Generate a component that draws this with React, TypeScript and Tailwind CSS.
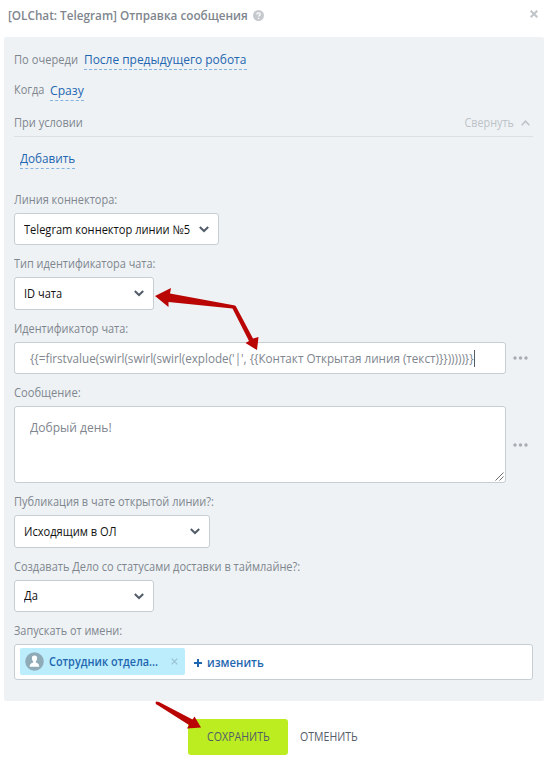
import type { ReactNode } from "react";

const LINK_BOX = "h-[19px] border-b border-dashed border-[#86b3de]";
const LINK_TEXT = "block w-max origin-left whitespace-nowrap text-[13px] leading-[16px] text-[#1f67b0]";
const CAPTION = "block w-max origin-left whitespace-nowrap text-[12px] leading-[18px] text-[#80868e]";

function Label({ children, className }: { children: ReactNode; className: string }) {
  return (
    <div className="h-8 pt-[10px]">
      <span className={`${CAPTION} ${className}`}>{children}</span>
    </div>
  );
}

function Select({ children, className, text }: { children: ReactNode; className: string; text: string }) {
  return (
    <div className={`flex items-center justify-between rounded-[3px] border border-[#c6cdd3] bg-white pl-[9px] pr-[9px] ${className}`}>
      <span className={`w-0 origin-left whitespace-nowrap text-[12px] leading-[16px] text-[#111] ${text}`}>{children}</span>
      <svg className="shrink-0" width="10" height="7" viewBox="0 0 10 7" fill="none" stroke="#535c69" strokeWidth="2">
        <path d="M0.8 1L5 5L9.2 1" />
      </svg>
    </div>
  );
}

function Dots() {
  return (
    <svg width="15" height="4" viewBox="0 0 15 4" fill="#a8adb4" className="ml-[7px] shrink-0">
      <circle cx="2" cy="2" r="1.7" />
      <circle cx="7.5" cy="2" r="1.7" />
      <circle cx="13" cy="2" r="1.7" />
    </svg>
  );
}

export default function App() {
  return (
    <div className="relative h-[761px] w-[545px] overflow-hidden bg-white font-['Open_Sans','Noto_Sans',sans-serif]">
      <header className="flex h-[37px] items-start pl-2 pr-[7px]">
        <h1 className="mt-[7px] w-[239px] origin-left scale-x-[0.978] whitespace-nowrap text-[12px] font-semibold leading-[18px] text-[#80868e]">
          [OLChat: Telegram] Отправка сообщения
        </h1>
        <svg className="ml-[6px] mt-[10px]" width="11" height="11" viewBox="0 0 11 11">
          <circle cx="5.5" cy="5.5" r="5.5" fill="#c6cacf" />
          <path d="M3.8 4.4C3.8 2.3 7.2 2.3 7.2 4.4C7.2 5.4 5.6 5.5 5.6 6.6M5.6 7.7V8.9" fill="none" stroke="#fff" strokeWidth="1.2" />
        </svg>
        <svg className="ml-auto mt-[10px]" width="8" height="8" viewBox="0 0 8 8" stroke="#c0c4c9" strokeWidth="2">
          <path d="M0.7 0.7L7.3 7.3M7.3 0.7L0.7 7.3" />
        </svg>
      </header>

      <main className="ml-1 h-[664px] w-[540px] rounded-[2px] bg-[#eef2f5] px-[10px] pr-[11px]">
        <div className="flex h-[38px] items-start pt-[14px]">
          <div className="w-[70px]">
            <span className={`${CAPTION} scale-x-[0.928]`}>По очереди</span>
          </div>
          <div className={`${LINK_BOX} w-[163px]`}>
            <span className={`${LINK_TEXT} scale-x-[0.918]`}>После предыдущего робота</span>
          </div>
        </div>
        <div className="flex h-[33px] items-start pt-[7px]">
          <div className="-mt-px w-[36px]">
            <span className={`${CAPTION} scale-x-[0.915]`}>Когда</span>
          </div>
          <div className={`${LINK_BOX} w-[34px]`}>
            <span className={`${LINK_TEXT} scale-x-[0.935]`}>Сразу</span>
          </div>
        </div>
        <div className="flex h-[29px] items-start border-b border-[#dce0e4] pt-[6px] text-[12px] leading-[18px]">
          <span className={`${CAPTION} scale-x-[0.92]`}>При условии</span>
          <span className="ml-auto origin-right scale-x-[0.9] whitespace-nowrap text-[#bdc2c8]">Свернуть</span>
          <svg className="ml-[7px] mr-[3px] mt-[6px]" width="9" height="6" viewBox="0 0 9 6" fill="none" stroke="#bdc2c8" strokeWidth="1.5">
            <path d="M0.7 5.2L4.5 1.2L8.3 5.2" />
          </svg>
        </div>
        <div className="h-[44px] pl-[6px] pt-[13px]">
          <div className={`${LINK_BOX} w-[55px]`}>
            <span className={`${LINK_TEXT} scale-x-[0.902]`}>Добавить</span>
          </div>
        </div>

        <Label className="scale-x-[0.916]">Линия коннектора:</Label>
        <Select className="h-8 w-[205px]" text="mt-[2px] scale-x-[0.924]">Telegram коннектор линии №5</Select>
        <Label className="scale-x-[0.91]">Тип идентификатора чата:</Label>
        <Select className="h-[33px] w-[140px]" text="scale-x-[0.92]">ID чата</Select>
        <Label className="scale-x-[0.91]">Идентификатор чата:</Label>
        <div className="flex items-center">
          <div className="flex h-8 w-[492px] shrink-0 items-center rounded-[3px] border border-[#c6cdd3] bg-white pl-[15px]">
            <span className="w-[444px] whitespace-nowrap text-[13px] leading-[18px] text-[#80868e]">
              <span className="block w-max origin-left scale-x-[0.897]">
                {"{{=firstvalue(swirl(swirl(swirl(explode('|', {{Контакт Открытая линия (текст)}})))))}}"}
              </span>
            </span>
            <span className="h-[17px] w-px bg-[#535c69]" />
          </div>
          <Dots />
        </div>
        <Label className="scale-x-[0.928]">Сообщение:</Label>
        <div className="flex items-center">
          <div className="flex h-[77px] w-[492px] items-start justify-between rounded-[3px] border border-[#c6cdd3] bg-white pl-[15px] pr-px">
            <span className="mt-[11px] origin-left scale-x-[0.926] whitespace-nowrap text-[13px] leading-[18px] text-[#80868e]">Добрый день!</span>
            <svg className="mb-px self-end" width="9" height="9" viewBox="0 0 9 9" stroke="#5c5c5c" strokeWidth="0.9">
              <path d="M0.5 8.5L8.5 0.5M4.5 8.5L8.5 4.5" />
            </svg>
          </div>
          <Dots />
        </div>
        <Label className="scale-x-[0.915]">Публикация в чате открытой линии?:</Label>
        <Select className="h-[33px] w-[196px]" text="scale-x-[0.925]">Исходящим в ОЛ</Select>
        <Label className="scale-x-[0.917]">Создавать Дело со статусами доставки в таймлайне?:</Label>
        <Select className="h-8 w-[140px]" text="scale-x-[0.93]">Да</Select>
        <Label className="scale-x-[0.908]">Запускать от имени:</Label>
        <div className="flex h-9 w-[519px] items-center rounded-[3px] border border-[#c6cdd3] bg-white pl-[5px]">
          <div className="mb-px flex h-[27px] w-[165px] items-center rounded-[2px] bg-[#bcedfc] pl-[5px] pr-[7px]">
            <svg className="shrink-0" width="19" height="19" viewBox="0 0 19 19">
              <circle cx="9.5" cy="9.5" r="9.3" fill="#8fabb7" />
              <path d="M9.5 3.5C7.6 3.5 6.7 4.8 6.9 6.5C7 8 7.6 8.8 8.2 9.4V10.5C6.5 11.2 4.9 11.5 4.7 14.8H14.3C14.1 11.5 12.5 11.2 10.8 10.5V9.4C11.4 8.8 12 8 12.1 6.5C12.3 4.8 11.4 3.5 9.5 3.5Z" fill="#fff" />
            </svg>
            <span className="ml-[5px] w-[109px] whitespace-nowrap text-[12px] font-semibold leading-[18px] text-[#1f67b0]">
              <span className="block w-max origin-left scale-x-[0.907]">Сотрудник отдела...</span>
            </span>
            <svg className="ml-auto" width="7" height="7" viewBox="0 0 7 7" stroke="#98c1d1" strokeWidth="1.2">
              <path d="M0.7 0.7L6.3 6.3M6.3 0.7L0.7 6.3" />
            </svg>
          </div>
          <svg className="ml-[9px] mt-px" width="8" height="8" viewBox="0 0 8 8" stroke="#1f67b0" strokeWidth="2">
            <path d="M0 4H8M4 0V8" />
          </svg>
          <span className="ml-[5px] mt-px origin-left scale-x-[0.945] whitespace-nowrap text-[12px] font-semibold leading-[18px] text-[#1f67b0]">изменить</span>
        </div>
      </main>

      <footer className="flex items-center pl-[188px] pt-[18px] text-[12px] leading-[18px] text-[#535c69]">
        <button className="flex h-9 w-[100px] items-center justify-center whitespace-nowrap rounded-[3px] bg-[#bbed21]">
          <span className="scale-x-[0.885]">СОХРАНИТЬ</span>
        </button>
        <span className="ml-3 origin-left scale-x-[0.88] whitespace-nowrap">ОТМЕНИТЬ</span>
      </footer>

      <svg className="pointer-events-none absolute left-0 top-0" width="545" height="761" viewBox="0 0 545 761" fill="#b90504">
        <path d="M155 296L171 288L170 293.500L235 305.500L236 306.500L253 338.500L258.500 337L257 350L245.500 343L249 341L232.500 308.500L168.500 302L168.500 307Z" />
        <path d="M156 701.500C155 703.500 156 704.500 157.500 705L189 725L187 728.500L201 727.500L194.500 716.500L192.500 719.500L159 702Z" />
      </svg>
    </div>
  );
}
